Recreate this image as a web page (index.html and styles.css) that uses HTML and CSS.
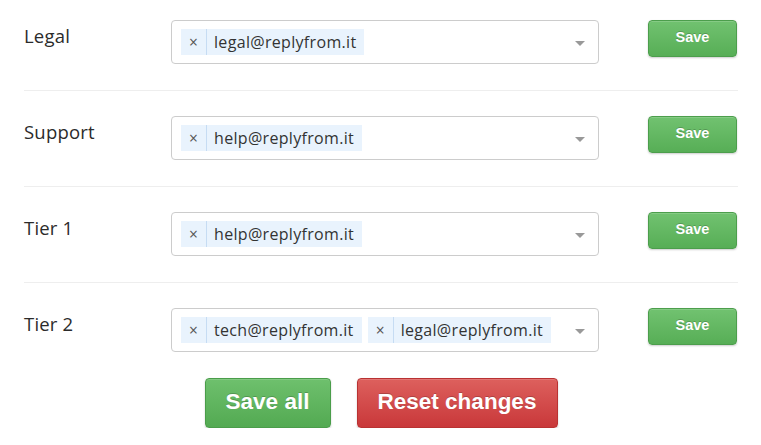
FILE: index.html
```html
<!DOCTYPE html>
<html>
<head>
<meta charset="utf-8">
<link rel="stylesheet" href="styles.css">
</head>
<body>
<div class="panel">
  <div class="row">
    <div class="label">Legal</div>
    <div class="select">
      <div class="tags">
        <span class="tag"><span class="rm">×</span><span class="tx">legal@replyfrom.it</span></span>
      </div>
      <span class="arrow"></span>
    </div>
    <button class="btn btn-save">Save</button>
  </div>
  <div class="row">
    <div class="label">Support</div>
    <div class="select">
      <div class="tags">
        <span class="tag"><span class="rm">×</span><span class="tx">help@replyfrom.it</span></span>
      </div>
      <span class="arrow"></span>
    </div>
    <button class="btn btn-save">Save</button>
  </div>
  <div class="row">
    <div class="label">Tier 1</div>
    <div class="select">
      <div class="tags">
        <span class="tag"><span class="rm">×</span><span class="tx">help@replyfrom.it</span></span>
      </div>
      <span class="arrow"></span>
    </div>
    <button class="btn btn-save">Save</button>
  </div>
  <div class="row last">
    <div class="label">Tier 2</div>
    <div class="select">
      <div class="tags">
        <span class="tag"><span class="rm">×</span><span class="tx">tech@replyfrom.it</span></span>
        <span class="tag"><span class="rm">×</span><span class="tx">legal@replyfrom.it</span></span>
      </div>
      <span class="arrow"></span>
    </div>
    <button class="btn btn-save">Save</button>
  </div>
  <div class="actions">
    <button class="btn btn-lg btn-green">Save all</button>
    <button class="btn btn-lg btn-red">Reset changes</button>
  </div>
</div>
</body>
</html>
```

FILE: styles.css
```css
html, body {
  margin: 0;
  padding: 0;
  background: #fff;
}
body {
  font-family: "Open Sans", "Noto Sans", sans-serif;
  color: #333;
}
.panel {
  width: 714px;
  margin-left: 24px;
  padding-top: 20px;
}
.row {
  display: flex;
  align-items: flex-start;
  padding-bottom: 26px;
  border-bottom: 1px solid #eeeeee;
  margin-bottom: 25px;
}
.row.last {
  border-bottom: none;
  margin-bottom: 0;
}
.label {
  width: 147px;
  flex: none;
  font-size: 18.5px;
  line-height: 24px;
  padding-top: 4px;
  letter-spacing: 0.2px;
  color: #2b2b2b;
}
.select {
  width: 428px;
  height: 44px;
  box-sizing: border-box;
  border: 1px solid #cccccc;
  border-radius: 4px;
  display: flex;
  align-items: center;
  padding: 0 13px 0 9px;
  flex: none;
}
.tags {
  flex: 1;
  display: flex;
  gap: 6px;
}
.tag {
  display: flex;
  align-items: stretch;
  height: 26px;
  background: #e9f3fd;
  font-size: 16px;
  line-height: 27px;
  color: #333;
}
.rm {
  width: 25px;
  text-align: center;
  border-right: 1px solid #c6dcf3;
  color: #555;
  font-size: 15.5px;
}
.tx {
  padding: 0 8px 0 7px;
  letter-spacing: 0.32px;
}
.arrow {
  width: 0;
  height: 0;
  border-left: 5.5px solid transparent;
  border-right: 5.5px solid transparent;
  border-top: 5px solid #999;
  margin-top: 2px;
}
.btn {
  font-family: "Liberation Sans", Arial, sans-serif;
  font-weight: bold;
  color: #fff;
  border-radius: 4px;
  cursor: pointer;
  white-space: nowrap;
  text-shadow: 0 -1px 0 rgba(0, 0, 0, 0.2);
  box-shadow: inset 0 1px 0 rgba(255, 255, 255, 0.15), 0 1px 2px rgba(0, 0, 0, 0.2);
  padding: 0;
  box-sizing: border-box;
}
.btn-save {
  margin-left: 49px;
  width: 89px;
  height: 37px;
  font-size: 14.5px;
  line-height: 33px;
  background: linear-gradient(to bottom, #71c270 0%, #57ae56 100%);
  border: 1px solid #4c9e4c;
  padding-bottom: 2px;
}
.actions {
  display: flex;
  justify-content: center;
  gap: 26px;
}
.btn-lg {
  height: 50px;
  font-size: 22.5px;
  line-height: 46px;
  padding: 0 0 2px;
}
.btn-green {
  width: 126px;
  background: linear-gradient(to bottom, #6ec06d 0%, #53aa52 100%);
  border: 1px solid #4a9d4a;
}
.btn-red {
  width: 201px;
  background: linear-gradient(to bottom, #dd605d 0%, #c9383a 100%);
  border: 1px solid #b93232;
}
```
